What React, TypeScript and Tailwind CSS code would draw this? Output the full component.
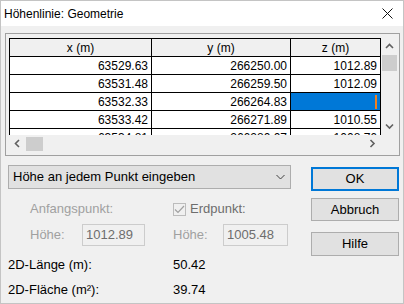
import React from 'react'

const rows = [
  { x: '63529.63', y: '266250.00', z: '1012.89' },
  { x: '63531.48', y: '266259.50', z: '1012.09' },
  { x: '63532.33', y: '266264.83', z: '', selected: true },
  { x: '63533.42', y: '266271.89', z: '1010.55' },
  { x: '63534.81', y: '266280.07', z: '1008.76' },
]

const Chevron = ({ dir }: { dir: 'up' | 'down' | 'left' | 'right' }) => {
  const d = {
    up: 'M1 5 L4.5 1.5 L8 5',
    down: 'M1 1.5 L4.5 5 L8 1.5',
    left: 'M5 1 L1.5 4.5 L5 8',
    right: 'M1.5 1 L5 4.5 L1.5 8',
  }[dir]
  const vertical = dir === 'up' || dir === 'down'
  return (
    <svg width={vertical ? 9 : 7} height={vertical ? 7 : 9} viewBox={vertical ? '0 0 9 7' : '0 0 7 9'}>
      <path d={d} fill="none" stroke="#606060" strokeWidth="1.6" />
    </svg>
  )
}

export default function App() {
  return (
    <div className="flex h-[304px] w-[404px] flex-col overflow-hidden border border-[#c4c4c4] bg-[#f0f0f0] font-['Liberation_Sans',Arial,sans-serif] text-[13px] text-black">
      {/* title bar */}
      <div className="flex h-[25px] shrink-0 items-center justify-between bg-white pl-[3px] pr-[10px]">
        <span className="text-[12px] leading-none">Höhenlinie: Geometrie</span>
        <svg width="11" height="11" viewBox="0 0 11 11">
          <path d="M0.5 0.5 L10.5 10.5 M10.5 0.5 L0.5 10.5" stroke="#111" strokeWidth="1" />
        </svg>
      </div>

      <div className="px-[4px] pt-[7px]">
        {/* grid frame */}
        <div className="flex h-[123px] w-[395px] border border-[#a0a0a0] pl-[3px] pt-[4px]">
          <div className="flex w-[372px] flex-col">
            <div className="h-[97px] overflow-hidden border-l border-t border-black text-[12px]">
              <div className="flex h-[18px] bg-[#f0f0f0]">
                <div className="flex w-[142px] items-center justify-center border-b border-r border-black">x (m)</div>
                <div className="flex w-[139px] items-center justify-center border-b border-r border-black">y (m)</div>
                <div className="flex w-[90px] items-center justify-center border-b border-r border-black">z (m)</div>
              </div>
              {rows.map((r) => (
                <div key={r.x} className="flex h-[18px] bg-white">
                  <div className="flex w-[142px] items-center justify-end border-b border-r border-black pr-[3px]">{r.x}</div>
                  <div className="flex w-[139px] items-center justify-end border-b border-r border-black pr-[3px]">{r.y}</div>
                  {r.selected ? (
                    <div className="flex w-[90px] items-center justify-end border-b border-r border-black bg-[#0078d7] pr-[3px]">
                      <span className="h-[14px] w-[2px] bg-[#f08020]" />
                    </div>
                  ) : (
                    <div className="flex w-[90px] items-center justify-end border-b border-r border-black pr-[3px]">{r.z}</div>
                  )}
                </div>
              ))}
            </div>
            {/* horizontal scrollbar */}
            <div className="flex h-[17px] items-center">
              <div className="flex w-[17px] justify-center">
                <Chevron dir="left" />
              </div>
              <div className="h-[14px] w-[17px] bg-[#cdcdcd]" />
              <div className="flex-1" />
              <div className="flex w-[17px] justify-center">
                <Chevron dir="right" />
              </div>
            </div>
          </div>
          {/* vertical scrollbar */}
          <div className="flex h-[97px] w-[17px] flex-col items-center">
            <div className="flex h-[17px] items-center justify-center">
              <Chevron dir="up" />
            </div>
            <div className="h-[16px] w-[15px] bg-[#cdcdcd]" />
            <div className="flex-1" />
            <div className="flex h-[17px] items-center justify-center">
              <Chevron dir="down" />
            </div>
          </div>
        </div>

        <div className="mt-[9px] flex">
          {/* left controls */}
          <div className="ml-[3px] flex w-[283px] flex-col">
            <div className="flex h-[24px] items-center justify-between border border-[#adadad] bg-[#e1e1e1] pl-[4px] pr-[5px]">
              <span>Höhe an jedem Punkt eingeben</span>
              <svg width="9" height="6" viewBox="0 0 9 6">
                <path d="M0.5 1 L4.5 5 L8.5 1" fill="none" stroke="#404040" strokeWidth="1" />
              </svg>
            </div>

            <div className="mt-[12px] flex h-[16px] items-center">
              <span className="ml-[22px] w-[143px] text-[#a0a0a0]">Anfangspunkt:</span>
              <span className="flex h-[13px] w-[13px] items-center justify-center border border-[#bcbcbc] bg-[#f0f0f0]">
                <svg width="11" height="9" viewBox="0 0 11 9">
                  <path d="M1 4.5 L4 7.5 L10 1" fill="none" stroke="#a0a0a0" strokeWidth="1.2" />
                </svg>
              </span>
              <span className="ml-[4px] text-[#6d6d6d]">Erdpunkt:</span>
            </div>

            <div className="mt-[7px] flex h-[22px] items-center">
              <span className="ml-[22px] w-[52px] text-[#a0a0a0]">Höhe:</span>
              <div className="flex h-[22px] w-[63px] items-center border border-[#cccccc] pl-[3px] text-[#6d6d6d]">1012.89</div>
              <span className="ml-[28px] w-[50px] text-[#a0a0a0]">Höhe:</span>
              <div className="flex h-[22px] w-[65px] items-center border border-[#cccccc] pl-[3px] text-[#6d6d6d]">1005.48</div>
            </div>

            <div className="mt-[11px] flex h-[16px] items-center">
              <span className="w-[165px]">2D-Länge (m):</span>
              <span>50.42</span>
            </div>
            <div className="mt-[9px] flex h-[16px] items-center">
              <span className="w-[165px]">2D-Fläche (m²):</span>
              <span>39.74</span>
            </div>
          </div>

          {/* buttons */}
          <div className="ml-[20px] mt-[2px] flex w-[88px] flex-col">
            <button className="flex h-[24px] items-center justify-center border-2 border-[#0078d7] bg-[#e1e1e1]">OK</button>
            <button className="mt-[7px] flex h-[23px] items-center justify-center border border-[#adadad] bg-[#e1e1e1]">Abbruch</button>
            <button className="mt-[11px] flex h-[24px] items-center justify-center border border-[#adadad] bg-[#e1e1e1]">Hilfe</button>
          </div>
        </div>
      </div>
    </div>
  )
}
